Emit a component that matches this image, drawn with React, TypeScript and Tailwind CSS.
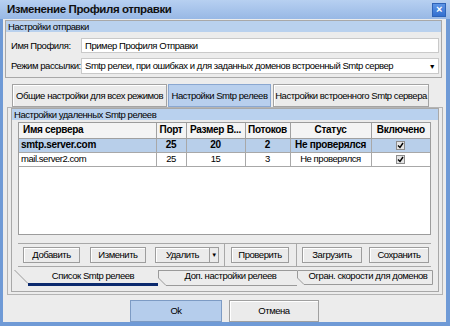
import type { ReactNode } from 'react';

const FONT = { fontFamily: '"Liberation Sans", Arial, sans-serif' };

function Check() {
  return (
    <span className="inline-flex h-[9px] w-[9px] items-center justify-center border border-[#8c8c8c] bg-[#e4e4e4]">
      <svg width="7" height="7" viewBox="0 0 7 7">
        <path d="M1 3.5 L3 5.5 L6 1" fill="none" stroke="#000" strokeWidth="1.4" />
      </svg>
    </span>
  );
}

function Btn({ w, children }: { w: string; children: ReactNode }) {
  return (
    <div
      className={`${w} flex h-[16px] items-center justify-center border border-[#9d9d9d] bg-[#ebebeb] text-black shadow-[inset_1px_1px_0_#fff]`}
    >
      {children}
    </div>
  );
}

const rows = [
  { name: 'smtp.server.com', port: '25', size: '20', threads: '2', status: 'Не проверялся', sel: true },
  { name: 'mail.server2.com', port: '25', size: '15', threads: '3', status: 'Не проверялся', sel: false },
];

export default function App() {
  return (
    <div
      style={FONT}
      className="flex h-[326px] w-[450px] flex-col whitespace-nowrap bg-[#6f9ad6] text-[9.5px] leading-none tracking-[-0.45px] text-black"
    >
      {/* title bar */}
      <div className="flex h-[19px] items-center bg-gradient-to-b from-[#b7d0f1] to-[#98b8e5] pl-[7px] pr-[4px]">
        <span className="text-[11.5px] font-bold tracking-[-0.4px] text-[#101010]">Изменение Профиля отправки</span>
        <div className="ml-auto flex h-[14px] w-[14px] items-center justify-center border border-[#2e63b8] bg-gradient-to-b from-[#5d95e6] to-[#336fcf] text-[11px] font-bold text-white">
          ×
        </div>
      </div>

      {/* client */}
      <div className="mb-[4px] ml-[3px] mr-[4px] flex flex-1 flex-col bg-[#ececec]">
        {/* group: sending settings */}
        <div className="ml-[2px] mr-[4px] mt-[1px] h-[58px] border border-[#a8a8a8]">
          <div className="flex h-[11px] items-center bg-[#b9d1ee] pl-[2px]">Настройки отправки</div>
          <div className="flex flex-col gap-[5px] pl-[5px] pr-[2px] pt-[6px]">
            <div className="flex h-[15px] items-center">
              <span className="w-[70px]">Имя Профиля:</span>
              <div className="flex h-[15px] flex-1 items-center border border-[#c9c9c9] bg-white pl-[3px]">
                Пример Профиля Отправки
              </div>
            </div>
            <div className="flex h-[16px] items-center">
              <span className="w-[70px]">Режим рассылки:</span>
              <div className="flex h-[16px] flex-1 items-center border border-[#c9c9c9] bg-white pl-[3px]">
                <span>Smtp релеи, при ошибках и для заданных доменов встроенный Smtp сервер</span>
                <span className="ml-auto flex w-[12px] justify-center text-[7px]">▼</span>
              </div>
            </div>
          </div>
        </div>

        {/* top tabs */}
        <div className="ml-[9px] mt-[6px] flex h-[23px] items-stretch">
          <div className="flex w-[155px] items-center justify-center border border-[#a3a3a3] bg-[#ebebeb] shadow-[inset_1px_1px_0_#fff]">
            Общие настройки для всех режимов
          </div>
          <div className="ml-[1px] flex w-[103px] items-center justify-center border border-[#8aa7d0] bg-[#b8cfed]">
            Настройки Smtp релеев
          </div>
          <div className="ml-[2px] flex w-[156px] items-center justify-center border border-[#a3a3a3] bg-[#ebebeb] shadow-[inset_1px_1px_0_#fff]">
            Настройки встроенного Smtp сервера
          </div>
        </div>

        {/* tab page */}
        <div className="ml-[4px] h-[188px] w-[436px] border border-[#b4b4b4] px-[3px]">
          <div className="flex h-[184px] flex-col border border-[#a8a8a8]">
            <div className="flex h-[11px] items-center bg-[#b9d1ee] pl-[2px]">Настройки удаленных Smtp релеев</div>

            {/* grid */}
            <div className="ml-[6px] mt-[2px] h-[113px] w-[413px] border border-[#9c9c9c] bg-white text-[10px] tracking-[-0.3px]">
              <table className="border-collapse" style={{ tableLayout: 'fixed' }}>
                <colgroup>
                  <col className="w-[137px]" />
                  <col className="w-[30px]" />
                  <col className="w-[59px]" />
                  <col className="w-[45px]" />
                  <col className="w-[81px]" />
                  <col className="w-[59px]" />
                </colgroup>
                <thead>
                  <tr className="h-[15px] bg-[#f4f4f4] font-bold">
                    <th className="border-b border-r border-[#a0a0a0] pl-[4px] text-left">Имя сервера</th>
                    <th className="border-b border-r border-[#a0a0a0] text-center">Порт</th>
                    <th className="border-b border-r border-[#a0a0a0] text-center">Размер В...</th>
                    <th className="border-b border-r border-[#a0a0a0] text-center">Потоков</th>
                    <th className="border-b border-r border-[#a0a0a0] text-center">Статус</th>
                    <th className="border-b border-[#a0a0a0] text-center">Включено</th>
                  </tr>
                </thead>
                <tbody>
                  {rows.map(r => (
                    <tr
                      key={r.name}
                      className={r.sel ? 'h-[14px] bg-[#b8cfea] font-bold' : 'h-[14px] bg-white text-[9.5px] tracking-[-0.45px]'}
                    >
                      <td className="border-b border-r border-[#a8a8a8] pl-[2px]">{r.name}</td>
                      <td className="border-b border-r border-[#a8a8a8] text-center">{r.port}</td>
                      <td className="border-b border-r border-[#a8a8a8] text-center">{r.size}</td>
                      <td className="border-b border-r border-[#a8a8a8] text-center">{r.threads}</td>
                      <td className="border-b border-r border-[#a8a8a8] text-center">{r.status}</td>
                      <td className="border-b border-[#a8a8a8] text-center">
                        <span className="flex items-center justify-center">
                          <Check />
                        </span>
                      </td>
                    </tr>
                  ))}
                </tbody>
              </table>
            </div>

            {/* button bar */}
            <div className="ml-[6px] mt-[8px] flex h-[24px] w-[413px] items-center border-y border-[#a8a8a8] pl-[5px]">
              <Btn w="w-[57px]">Добавить</Btn>
              <div className="ml-[10px]">
                <Btn w="w-[56px]">Изменить</Btn>
              </div>
              <div className="ml-[9px] flex">
                <Btn w="w-[55px]">Удалить</Btn>
                <div className="flex h-[16px] w-[9px] items-center justify-center border border-l-0 border-[#9d9d9d] bg-[#ebebeb] text-[6px]">
                  ▼
                </div>
              </div>
              <div className="ml-[5px] h-[24px] w-px bg-[#a8a8a8]" />
              <div className="ml-[6px]">
                <Btn w="w-[58px]">Проверить</Btn>
              </div>
              <div className="ml-[7px] h-[24px] w-px bg-[#a8a8a8]" />
              <div className="ml-[5px]">
                <Btn w="w-[60px]">Загрузить</Btn>
              </div>
              <div className="ml-[7px]">
                <Btn w="w-[60px]">Сохранить</Btn>
              </div>
            </div>

            {/* bottom tabs */}
            <div className="ml-[2px] flex h-[20px]">
              <div className="relative flex w-[144px] items-center justify-center pb-[2px] pl-[14px]">
                <svg className="absolute inset-0" width="144" height="20" viewBox="0 0 144 20">
                  <path d="M0.5 3 L14 16.5" stroke="#9a9a9a" fill="none" />
                  <rect x="14" y="16" width="130" height="3" fill="#0b2a6e" />
                </svg>
                <span className="relative">Список Smtp релеев</span>
              </div>
              <div className="relative flex w-[139px] items-center justify-center pb-[2px] pl-[6px]">
                <svg className="absolute inset-0" width="139" height="20" viewBox="0 0 139 20">
                  <path d="M0.5 3 V11 L8 18.5 H139 M0.5 3.5 H139" stroke="#9a9a9a" fill="none" />
                </svg>
                <span className="relative">Доп. настройки релеев</span>
              </div>
              <div className="relative flex w-[136px] items-center justify-center pb-[2px] pl-[6px]">
                <svg className="absolute inset-0" width="136" height="20" viewBox="0 0 136 20">
                  <path d="M0.5 3.5 V11 L7 17.5 H135.5 V3.5 H0.5" stroke="#9a9a9a" fill="#ececec" />
                </svg>
                <span className="relative">Огран. скорости для доменов</span>
              </div>
            </div>
          </div>
        </div>

        {/* dialog buttons */}
        <div className="mt-[5px] flex justify-center gap-[7px]">
          <div className="flex h-[22px] w-[92px] items-center justify-center border border-[#7d9bc4] bg-[#b5cdec]">Ok</div>
          <div className="flex h-[22px] w-[90px] items-center justify-center border border-[#a0a0a0] bg-[#ebebeb] shadow-[inset_1px_1px_0_#fff]">
            Отмена
          </div>
        </div>
      </div>
    </div>
  );
}
